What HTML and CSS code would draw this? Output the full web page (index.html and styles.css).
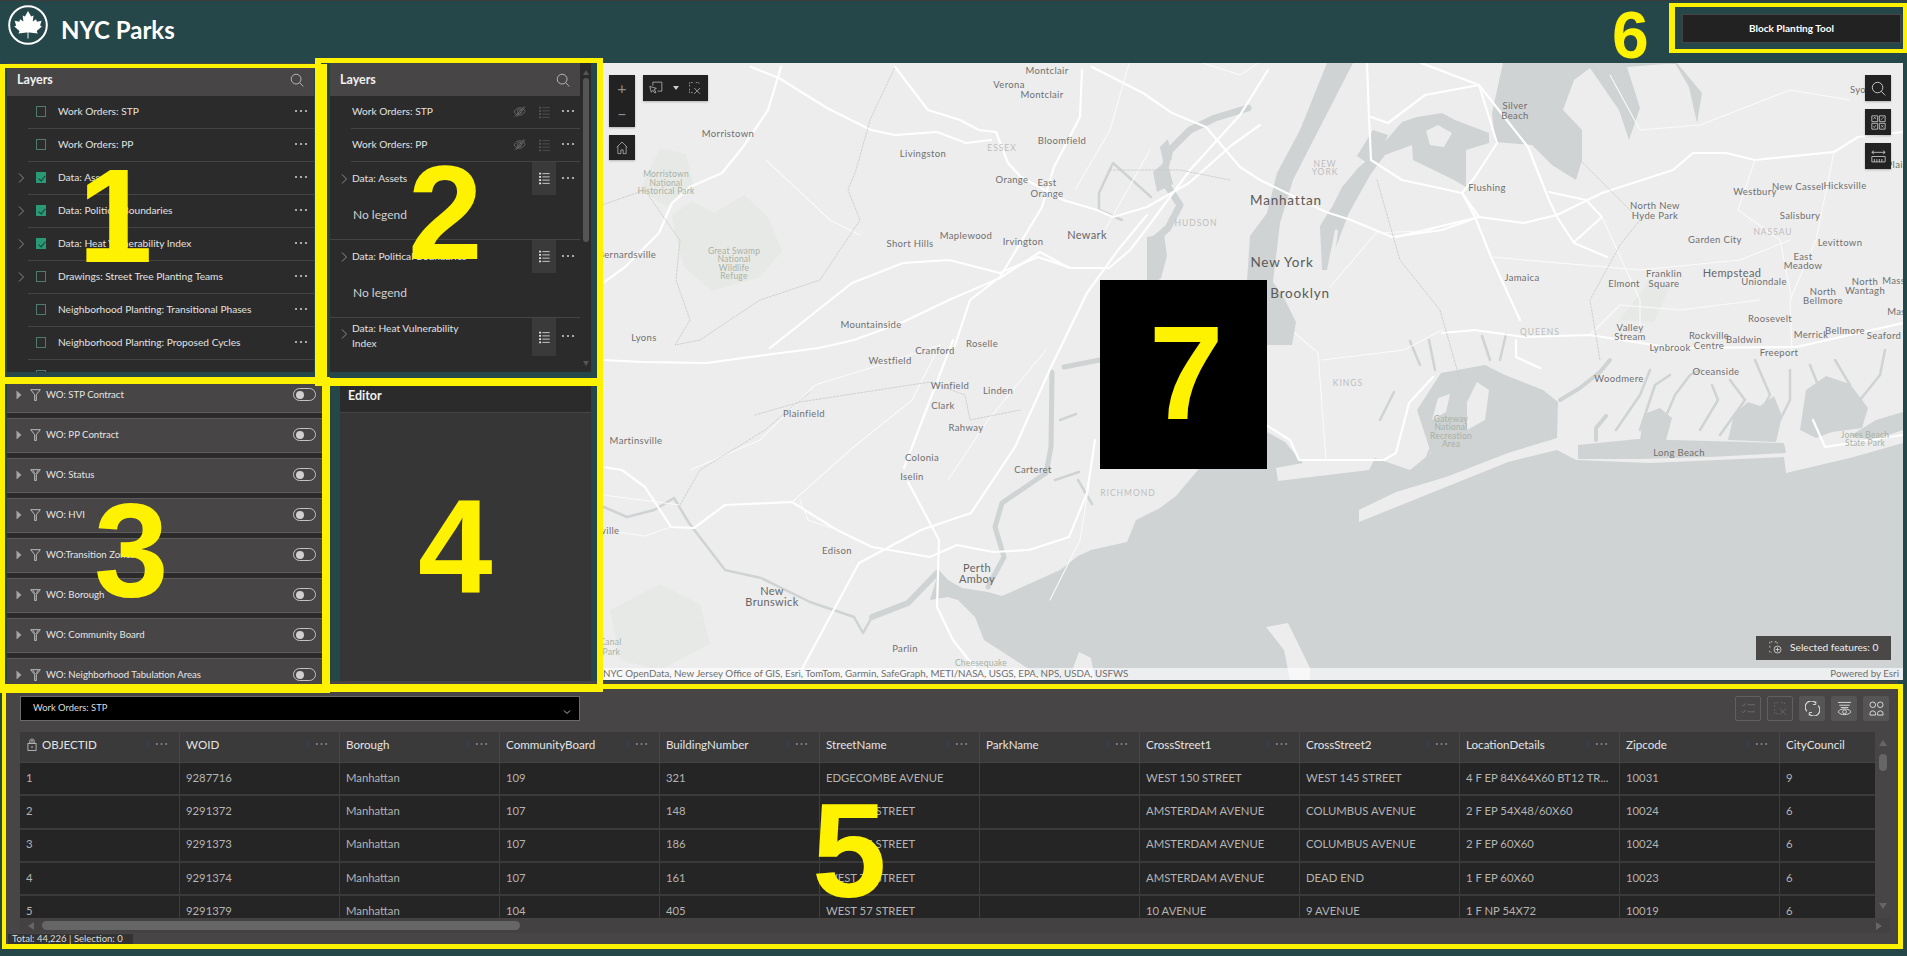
FILE: index.html
```html
<!DOCTYPE html>
<html lang="en">
<head>
<meta charset="utf-8">
<title>NYC Parks</title>
<link rel="stylesheet" href="styles.css">
</head>
<body>
<svg class="sprite" aria-hidden="true">
  <symbol id="i-search" viewBox="0 0 16 16"><circle cx="7" cy="7" r="5.6" fill="none" stroke="currentColor"/><path d="M11 11l4.2 4.4" stroke="currentColor" fill="none"/></symbol>
  <symbol id="i-dots" viewBox="0 0 14 4"><circle cx="2" cy="2" r="1.1" fill="currentColor"/><circle cx="7" cy="2" r="1.1" fill="currentColor"/><circle cx="12" cy="2" r="1.1" fill="currentColor"/></symbol>
  <symbol id="i-chev" viewBox="0 0 8 12"><path d="M2 1.5L6.5 6 2 10.5" fill="none" stroke="currentColor"/></symbol>
  <symbol id="i-list" viewBox="0 0 14 16"><path d="M1 2h2.4M1 6h2.4M1 10h2.4M1 14h2.4" stroke="currentColor" stroke-width="2" fill="none"/><path d="M5 2h9M5 6h9M5 10h9M5 14h9" stroke="currentColor" fill="none"/></symbol>
  <symbol id="i-eyeoff" viewBox="0 0 14 14"><path d="M1 7.5C3 4 5 3 7.5 3S12 4.5 13 7c-2 3-4 4-6 4S2.500 10 1 7.500z" fill="none" stroke="currentColor"/><circle cx="7" cy="7" r="2.200" fill="none" stroke="currentColor"/><path d="M2 12.500L12 1.500M4 12.500l9-10" stroke="currentColor" fill="none"/></symbol>
  <symbol id="i-funnel" viewBox="0 0 11 12"><path d="M.7.700h9.600L6.300 5.700v5.800H4.700V5.700z" fill="none" stroke="currentColor" stroke-width=".9"/></symbol>
  <symbol id="i-funnel2" viewBox="0 0 11 12"><path d="M.7.700h9.600L6.300 5.700v5.800H4.700V5.700z" fill="none" stroke="currentColor" stroke-width=".9"/><path d="M3 1l2 4M8 1L6 5" stroke="currentColor" stroke-width=".7"/></symbol>
  <symbol id="i-caret" viewBox="0 0 6 10"><path d="M.5.500L5.500 5 .5 9.500z" fill="currentColor"/></symbol>
  <symbol id="i-lock" viewBox="0 0 10 14"><path d="M2.500 6V3.500a2.500 2.500 0 0 1 5 0V6M4 6V3.500a1 1 0 0 1 2 0V6" fill="none" stroke="currentColor" stroke-width=".8"/><rect x=".6" y="6" width="8.800" height="7.400" fill="none" stroke="currentColor" stroke-width=".9"/><path d="M5 8.500v2.500" stroke="currentColor"/></symbol>
  <symbol id="i-sort" viewBox="0 0 6 12"><path d="M3 1l2.500 3.500h-5zM3 11L.5 7.500h5z" fill="currentColor"/></symbol>
  <symbol id="i-down" viewBox="0 0 8 6"><path d="M1 1.500L4 4.500 7 1.500" fill="none" stroke="currentColor"/></symbol>
  <symbol id="i-home" viewBox="0 0 16 18"><path d="M8 1L2.500 6.500v10h4v-5h3v5h4v-10zM2.500 6.500L1 8M13.500 6.500L15 8" fill="none" stroke="currentColor"/></symbol>
  <symbol id="i-select" viewBox="0 0 18 18"><path d="M5 6V1.500h11.500v11.500H11" fill="none" stroke="currentColor"/><path d="M1 7l8.500 2.500-3 1.500 2.500 3.500-1.500 1-2.500-3.500-2 2.500z" fill="none" stroke="currentColor"/></symbol>
  <symbol id="i-clear" viewBox="0 0 18 18"><path d="M2 7V2h5M10 2h4v3M2 10v5h4" fill="none" stroke="currentColor" stroke-dasharray="2 1.500"/><path d="M8 9l7.500 7.500M15.500 9L8 16.500" fill="none" stroke="currentColor"/></symbol>
  <symbol id="i-qr" viewBox="0 0 18 18"><path d="M1 1h7v7H1zM10 1h7v7h-7zM1 10h7v7H1zM10 10h7v7h-7z" fill="none" stroke="currentColor"/><path d="M3 5l1.500-2.500L6 5M11.500 6L15.500 2.500M3 13l1 2 2-3M12 12l3 3M15 12l-3 3" fill="none" stroke="currentColor" stroke-width=".8"/></symbol>
  <symbol id="i-measure" viewBox="0 0 18 18"><path d="M1 4h16M1 4l2.500-2M1 4l2.500 2M17 4l-2.500-2M17 4l-2.500 2" fill="none" stroke="currentColor"/><path d="M1 9h16v6.500H1z" fill="none" stroke="currentColor"/><path d="M4 12v3.500M7 12v3.500M10 12v3.500M13 12v3.500" stroke="currentColor"/></symbol>
  <symbol id="i-selfeat" viewBox="0 0 16 16"><path d="M1 3V1h3M7 1h3v2M1 6v3M1 12v2h2" fill="none" stroke="currentColor" stroke-dasharray="2 1.400"/><circle cx="10.500" cy="10.500" r="4.300" fill="none" stroke="currentColor"/><path d="M10.500 8v5M8 10.500h5" stroke="currentColor"/></symbol>
  <symbol id="i-checks" viewBox="0 0 16 14"><path d="M1 3l1.500 1.500L5 1.500M1 10l1.500 1.500L5 8.500" fill="none" stroke="currentColor"/><path d="M7 3h8M7 10.500h8" stroke="currentColor"/></symbol>
  <symbol id="i-refresh" viewBox="0 0 16 16"><path d="M2 11A6.500 6.500 0 0 1 11.500 2M14 5a6.500 6.500 0 0 1-9.500 9" fill="none" stroke="currentColor" stroke-width="1.200"/><path d="M11.500 .5v3.200H8.500M4.500 15.500v-3.200h3" fill="none" stroke="currentColor"/></symbol>
  <symbol id="i-eyelist" viewBox="0 0 16 16"><path d="M1 1.500h14M2.500 4.500h11M4 7h8" stroke="currentColor" fill="none"/><path d="M1 11.500C3 9 5.500 8.500 8 8.500s5 .5 7 3c-2 2.500-4.500 3-7 3s-5-.5-7-3z" fill="none" stroke="currentColor"/><circle cx="8" cy="11.500" r="2" fill="none" stroke="currentColor"/></symbol>
  <symbol id="i-grid4" viewBox="0 0 16 16"><circle cx="4" cy="4" r="3" fill="none" stroke="currentColor"/><circle cx="12" cy="4" r="3" fill="none" stroke="currentColor"/><path d="M1 15v-1.500a3 3 0 0 1 6 0V15zM9 15v-1.500a3 3 0 0 1 6 0V15z" fill="none" stroke="currentColor"/></symbol>
</svg>

<div class="app">
  <header class="topbar">
    <svg class="logo" viewBox="0 0 40 40"><circle cx="20" cy="20" r="18.800" fill="none" stroke="#fff" stroke-width="2"/><path d="M20 6l3.200 5.500 2.300-1-.7 6 3.200-2.300 1 2.500 4.500-.9-1.400 4.600 1.800 1.100-5.200 4.600 1 2.300-8.200-.8h-2.800l-8.200.8 1-2.300-5.200-4.600 1.800-1.100-1.400-4.600 4.500.9 1-2.500 3.200 2.300-.7-6 2.300 1z" fill="#fff"/><path d="M20 26v7.500" stroke="#fff" stroke-width=".9"/></svg>
    <div class="brand">NYC Parks</div>
    <button class="block-tool">Block Planting Tool</button>
  </header>

  <main class="workspace">
    <div class="sidebar">
      <section class="panel layers-a">
        <div class="panel-head"><span>Layers</span><svg class="ico-search"><use href="#i-search"/></svg></div>
        <div class="list">
          <div class="lrow"><span class="exp"></span><div class="lrow-in"><i class="cb"></i><span class="lname">Work Orders: STP</span><svg class="dots"><use href="#i-dots"/></svg></div></div>
          <div class="lrow"><span class="exp"></span><div class="lrow-in"><i class="cb"></i><span class="lname">Work Orders: PP</span><svg class="dots"><use href="#i-dots"/></svg></div></div>
          <div class="lrow"><span class="exp"><svg class="chev"><use href="#i-chev"/></svg></span><div class="lrow-in"><i class="cb on"></i><span class="lname">Data: Assets</span><svg class="dots"><use href="#i-dots"/></svg></div></div>
          <div class="lrow"><span class="exp"><svg class="chev"><use href="#i-chev"/></svg></span><div class="lrow-in"><i class="cb on"></i><span class="lname">Data: Political Boundaries</span><svg class="dots"><use href="#i-dots"/></svg></div></div>
          <div class="lrow"><span class="exp"><svg class="chev"><use href="#i-chev"/></svg></span><div class="lrow-in"><i class="cb on"></i><span class="lname">Data: Heat Vulnerability Index</span><svg class="dots"><use href="#i-dots"/></svg></div></div>
          <div class="lrow"><span class="exp"><svg class="chev"><use href="#i-chev"/></svg></span><div class="lrow-in"><i class="cb"></i><span class="lname">Drawings: Street Tree Planting Teams</span><svg class="dots"><use href="#i-dots"/></svg></div></div>
          <div class="lrow"><span class="exp"></span><div class="lrow-in"><i class="cb"></i><span class="lname">Neighborhood Planting: Transitional Phases</span><svg class="dots"><use href="#i-dots"/></svg></div></div>
          <div class="lrow"><span class="exp"></span><div class="lrow-in"><i class="cb"></i><span class="lname">Neighborhood Planting: Proposed Cycles</span><svg class="dots"><use href="#i-dots"/></svg></div></div>
          <div class="lrow"><span class="exp"></span><div class="lrow-in"><i class="cb"></i><span class="lname">Park Planting: Park Program Tasks</span><svg class="dots"><use href="#i-dots"/></svg></div></div>
        </div>
      </section>

      <section class="panel layers-b">
        <div class="layers-b-main">
          <div class="panel-head"><span>Layers</span><svg class="ico-search"><use href="#i-search"/></svg></div>
          <div class="list">
            <div class="brow"><div class="brow-in"><span class="bname">Work Orders: STP</span><svg class="ic-eye"><use href="#i-eyeoff"/></svg><span class="legend-btn off"><svg class="ic-list"><use href="#i-list"/></svg></span><svg class="dots"><use href="#i-dots"/></svg></div></div>
            <div class="brow"><div class="brow-in"><span class="bname">Work Orders: PP</span><svg class="ic-eye"><use href="#i-eyeoff"/></svg><span class="legend-btn off"><svg class="ic-list"><use href="#i-list"/></svg></span><svg class="dots"><use href="#i-dots"/></svg></div></div>
            <div class="bgroup">
              <div class="brow top"><svg class="chev b"><use href="#i-chev"/></svg><div class="brow-in plain"><span class="bname">Data: Assets</span><span class="legend-btn"><svg class="ic-list"><use href="#i-list"/></svg></span><svg class="dots"><use href="#i-dots"/></svg></div></div>
              <div class="nolegend">No legend</div>
            </div>
            <div class="bgroup">
              <div class="brow top"><svg class="chev b"><use href="#i-chev"/></svg><div class="brow-in plain"><span class="bname">Data: Political Boundaries</span><span class="legend-btn"><svg class="ic-list"><use href="#i-list"/></svg></span><svg class="dots"><use href="#i-dots"/></svg></div></div>
              <div class="nolegend">No legend</div>
            </div>
            <div class="brow tall"><svg class="chev b"><use href="#i-chev"/></svg><div class="brow-in plain"><span class="bname wrap">Data: Heat Vulnerability Index</span><span class="legend-btn"><svg class="ic-list"><use href="#i-list"/></svg></span><svg class="dots"><use href="#i-dots"/></svg></div></div>
          </div>
        </div>
        <div class="vbar"><i class="up"></i><i class="thumb"></i><i class="dn"></i></div>
      </section>

      <section class="filters">
        <div class="frow"><svg class="caret"><use href="#i-caret"/></svg><svg class="funnel"><use href="#i-funnel"/></svg><span>WO: STP Contract</span><i class="toggle"></i></div>
        <div class="frow"><svg class="caret"><use href="#i-caret"/></svg><svg class="funnel"><use href="#i-funnel"/></svg><span>WO: PP Contract</span><i class="toggle"></i></div>
        <div class="frow"><svg class="caret"><use href="#i-caret"/></svg><svg class="funnel"><use href="#i-funnel2"/></svg><span>WO: Status</span><i class="toggle"></i></div>
        <div class="frow"><svg class="caret"><use href="#i-caret"/></svg><svg class="funnel"><use href="#i-funnel"/></svg><span>WO: HVI</span><i class="toggle"></i></div>
        <div class="frow"><svg class="caret"><use href="#i-caret"/></svg><svg class="funnel"><use href="#i-funnel"/></svg><span>WO:Transition Zones</span><i class="toggle"></i></div>
        <div class="frow"><svg class="caret"><use href="#i-caret"/></svg><svg class="funnel"><use href="#i-funnel2"/></svg><span>WO: Borough</span><i class="toggle"></i></div>
        <div class="frow"><svg class="caret"><use href="#i-caret"/></svg><svg class="funnel"><use href="#i-funnel2"/></svg><span>WO: Community Board</span><i class="toggle"></i></div>
        <div class="frow"><svg class="caret"><use href="#i-caret"/></svg><svg class="funnel"><use href="#i-funnel2"/></svg><span>WO: Neighborhood Tabulation Areas</span><i class="toggle"></i></div>
      </section>

      <section class="editor">
        <div class="editor-head">Editor</div>
      </section>
    </div>

    <div class="map">
      <svg class="basemap" viewBox="600 63 1303 617" preserveAspectRatio="none">
        <rect x="600" y="63" width="1303" height="617" fill="#ededed"/>
        <!-- parks -->
        <path class="park" d="M672 215l20-14 22 12 30-18 24 22 14 34-22 26-48 14-28-24-8-30z"/>
        <path class="park" d="M640 190l20-42 26 6 8 34-28 18z"/>
        <path class="park" d="M1620 320l30-40 20 6-16 36z"/>
        <path class="park" d="M610 610l50-26 40 20 10 40-50 26-40-10z"/>
        <!-- ocean and bays -->
        <path class="w" d="M939 570L948 580 962 588 988 592 1002 596 1029 584 1060 570 1078 556 1091 550 1127 542 1136 520 1160 508 1176 496 1198 470 1230 440 1267 432 1285 442 1296 455 1303 463 1276 468 1278 481 1369 470 1375 458 1410 470 1431 453 1417 410 1441 373 1485 365 1505 375 1543 390 1558 402 1557 438 1508 453 1446 477 1396 492 1359 510 1359 522 1446 487 1508 462 1557 450 1576 460 1650 463 1784 457 1786 473 1850 458 1903 443V680H1046L1015 660 984 640 975 617 958 600 948 597 930 600z"/>
        <path class="w" d="M1578 445l60-6 70 2 76 2 2 10-76 4-70 2-62 0z"/>
        <path class="w" d="M1728 440l6-26 14-12 12 4 14-10 8 20-6 26zM1800 430l6-40 20-14 24 8 18 24-6 20-30 4-16 6zM1640 440l4-26 16-6 12 10-6 22zM1850 436l26-16 27-8v18l-30 10z"/>
        <path class="w" d="M1503 63L1492 113 1495 142 1532 145 1552 165 1576 180 1582 160 1582 130 1563 110 1574 80 1590 68 1619 110 1629 140 1640 108 1627 67 1677 63 1702 93 1697 123 1689 87 1675 63z"/>
        <path class="w" d="M1417 117L1402 122 1384 143 1371 157 1359 167 1342 187 1322 227 1338 230 1336 247 1348 215 1370 175 1385 155 1412 145 1413 160 1454 180 1466 187 1466 150 1489 143 1489 133 1455 120 1442 113z"/>
        <path class="w" d="M1327 63L1300 130 1277 173 1267 213 1250 236 1247 282 1220 300 1205 330 1260 345 1292 345 1296 322 1285 300 1273 282 1280 223 1293 180 1317 133 1353 63z"/>
        <path class="w" d="M1373 130L1357 156 1367 163 1330 210 1320 226 1322 270 1327 270 1335 230 1372 172 1388 135z"/>
        <path class="w" d="M1147 237l17-3 3 22-6 22-14 10z"/>
        <path class="w" d="M1160 147l8-8 4 20-8 6zM1153 172l14-12 6 24-16 8z"/>
        <path class="isl" d="M1266 627l22-4 22 45v12h-20l-6-30z"/>
        <path class="isl" d="M1073 668l6-16 12 6 4 22h-22z"/>
        <path class="ws" d="M1248 108L1215 118 1190 130 1170 150 1162 178 1180 205 1168 228 1154 240" stroke-width="7"/>
        <path class="ws thin" d="M1122 220L1099 210 1099 193 1113 163 1151 197"/>
        <path class="ws" d="M937 573L908 603 872 617" stroke-width="6"/>
        <path class="ws thin" d="M872 617L863 633 854 617 810 602 761 578 725 570 689 523 674 498 654 510 627 517 604 507"/>
        <path class="ws" d="M1064 367L1100 360M1052 372L1051 447 1046 473 1002 503 995 527 1004 557 988 587" stroke-width="5"/>
        <path class="ws thin" d="M1060 420l16-6M1078 480l14 24M1055 480l24-8"/>
        <path class="ws thin" d="M1616 430L1640 395 1650 370M1640 430L1655 385 1670 375M1660 430L1675 395 1690 375 1700 370M1700 430L1718 400 1712 385M1720 435L1745 400 1730 380M1750 430L1770 395 1755 360M1775 430L1790 400 1790 370M1810 420L1818 385 1810 365M1830 410L1850 385 1835 360M1860 400L1880 375 1885 350"/>
        <path class="ws thin" d="M1420 365l-10-24M1435 370l-6-30M1490 360l-8-24M1500 360l6-26M1380 420l14-28M1430 450l-8 20"/>
        <path class="ws" d="M1596 440l0-12 10-12M1560 400l20-12 20-16 10-12" stroke-width="4"/>
        <!-- islands -->
        <path class="isl" d="M1432 420l14-8 4-18-12 4z"/>
        <path class="isl" d="M1430 145l14 2 8-14-14-8-12 6z"/>
        <path class="isl" d="M1467 430l18-10 4-30-12-8-10 20z"/>
        <!-- motorways -->
        <g class="r1">
          <polyline points="781,67 768,110 743,147 722,173 690,187 672,203 659,233 625,267 603,283"/>
          <polyline points="751,67 779,78 827,108 871,130 895,135 937,132 966,143 991,140"/>
          <polyline points="895,67 928,110 960,120 979,130 996,132 1008,163 1021,177 1063,200 1097,210 1113,217 1147,207 1189,183 1232,145 1260,125"/>
          <polyline points="603,360 642,362 707,363 765,355 819,348 854,340 903,322 949,300 1000,278 1040,252 1069,268 1109,268 1130,250 1147,228 1190,170 1240,115 1268,70"/>
          <polyline points="770,348 852,283 903,263 949,260 1000,273 1038,257 1071,268 1109,268"/>
          <polyline points="796,680 859,563 921,530 971,513 1015,447 1051,367 1087,293 1118,250 1147,215"/>
          <polyline points="603,467 622,470 645,487 671,527 694,528 725,505 792,502 837,530 872,547 930,557 957,545 993,552 1029,550 1069,537 1087,493 1095,440"/>
          <polyline points="954,348 970,300 1000,277 1042,207 1054,167 1080,117 1082,70"/>
          <polyline points="904,468 953,340"/>
          <polyline points="908,482 939,540 937,607 953,640 975,668"/>
          <polyline points="1092,67 1143,93 1172,113 1206,127 1240,167 1260,180 1326,212 1351,220 1392,237 1442,230 1479,217 1524,223 1557,215 1602,193 1673,170 1693,153 1726,153 1755,160 1834,152 1858,137 1903,132"/>
          <polyline points="1396,237 1479,217 1462,193 1402,180 1371,160 1369,117 1367,63"/>
          <polyline points="1425,95 1479,85 1497,143 1475,177 1462,193 1475,217 1491,257 1520,320"/>
          <polyline points="1421,63 1479,85 1528,147 1549,200 1557,217 1574,243 1607,257"/>
          <polyline points="1574,242 1602,217 1586,200 1549,192"/>
          <polyline points="1371,117 1388,123 1425,95"/>
          <polyline points="1433,377 1409,403 1396,453 1384,460 1326,460 1299,460 1290,440 1250,415"/>
          <polyline points="1524,337 1590,335 1673,348 1796,347 1903,323"/>
          <polyline points="1813,420 1825,447 1903,435"/>
          <polyline points="1516,340 1516,357 1540,368"/>
          <polyline points="1442,333 1475,330 1524,337"/>
        </g>
        <g class="r2">
          <polyline points="603,530 645,536 671,527"/>
          <polyline points="948,480 988,420 1046,350"/>
          <polyline points="1330,287 1376,233 1442,230"/>
          <polyline points="1295,333 1318,353 1326,460"/>
          <polyline points="1322,360 1404,350 1442,330"/>
          <polyline points="1792,353 1790,300 1816,240 1834,152"/>
          <polyline points="1640,345 1640,300 1602,217"/>
          <polyline points="1755,160 1738,210 1780,240 1792,300"/>
          <polyline points="1491,257 1640,270 1740,260 1790,240"/>
          <polyline points="1590,335 1620,305 1680,310 1760,300"/>
          <polyline points="837,530 808,520 800,500M780,500 790,550 765,590 700,620 660,590 610,575"/>
          <polyline points="792,502 850,450 912,400 940,345"/>
          <polyline points="690,470 760,440 815,385 880,365 940,345"/>
          <polyline points="603,495 680,505"/>
          <polyline points="1130,60 1110,130 1075,190"/>
          <polyline points="766,160 830,220 860,235"/>
          <polyline points="1150,150 1105,230"/>
          <polyline points="1200,62 1240,75 1260,62"/>
          <polyline points="1050,600 1080,540 1088,490"/>
          <polyline points="1610,75 1640,130 1700,125 1790,90 1850,100"/>
        </g>
        <g class="bd">
          <polyline points="860,220 848,190 856,170 870,120 895,67"/>
          <polyline points="602,205 645,190 662,215 680,240 676,280 690,320 675,345 700,340 760,300 820,280 860,220"/>
          <polyline points="755,415 800,402 930,382 965,395 970,420 1020,410"/>
          <polyline points="680,505 700,470 765,430 810,392"/>
          <polyline points="1580,160 1640,220 1620,245 1590,300 1600,360"/>
          <polyline points="1377,180 1400,260 1440,310 1460,380"/>
          <polyline points="1110,170 1180,170 1230,180"/>
        </g>
        <!-- labels -->
        <g class="ml">
          <text x="1047" y="70">Montclair</text><text x="1009" y="84">Verona</text><text x="1042" y="94">Montclair</text><text x="728" y="133">Morristown</text><text x="923" y="153">Livingston</text><text x="1062" y="140">Bloomfield</text><text x="1012" y="179">Orange</text><text x="1047" y="182">East</text><text x="1047" y="193">Orange</text><text x="627" y="254">Bernardsville</text><text x="910" y="243">Short Hills</text><text x="966" y="235">Maplewood</text><text x="1023" y="241">Irvington</text><text x="871" y="324">Mountainside</text><text x="644" y="337">Lyons</text><text x="982" y="343">Roselle</text><text x="935" y="350">Cranford</text><text x="890" y="360">Westfield</text><text x="950" y="385">Winfield</text><text x="998" y="390">Linden</text><text x="943" y="405">Clark</text><text x="804" y="413">Plainfield</text><text x="966" y="427">Rahway</text><text x="636" y="440">Martinsville</text><text x="922" y="457">Colonia</text><text x="1033" y="469">Carteret</text><text x="912" y="476">Iselin</text><text x="596" y="530">Somerville</text><text x="837" y="550">Edison</text><text x="905" y="648">Parlin</text>
          <text x="1515" y="105">Silver</text><text x="1515" y="115">Beach</text><text x="1487" y="187">Flushing</text><text x="1755" y="191">Westbury</text><text x="1798" y="186">New Cassel</text><text x="1845" y="185">Hicksville</text><text x="1655" y="205">North New</text><text x="1655" y="215">Hyde Park</text><text x="1800" y="215">Salisbury</text><text x="1715" y="239">Garden City</text><text x="1840" y="242">Levittown</text><text x="1803" y="256">East</text><text x="1803" y="265">Meadow</text><text x="1664" y="273">Franklin</text><text x="1664" y="283">Square</text><text x="1624" y="283">Elmont</text><text x="1522" y="277">Jamaica</text><text x="1764" y="281">Uniondale</text><text x="1865" y="281">North</text><text x="1865" y="290">Wantagh</text><text x="1823" y="291">North</text><text x="1823" y="300">Bellmore</text><text x="1770" y="318">Roosevelt</text><text x="1630" y="327">Valley</text><text x="1630" y="336">Stream</text><text x="1709" y="335">Rockville</text><text x="1709" y="345">Centre</text><text x="1744" y="339">Baldwin</text><text x="1670" y="347">Lynbrook</text><text x="1779" y="352">Freeport</text><text x="1811" y="334">Merrick</text><text x="1845" y="330">Bellmore</text><text x="1884" y="335">Seaford</text><text x="1716" y="371">Oceanside</text><text x="1619" y="378">Woodmere</text><text x="1679" y="452">Long Beach</text><text x="1867" y="89">Syosset</text><text x="1908" y="164">Plainview</text><text x="1910" y="280">Massapequa</text><text x="1915" y="311">Massapequa</text>
        </g>
        <g class="ml big">
          <text x="1087" y="234">Newark</text><text x="1732" y="272">Hempstead</text><text x="977" y="567">Perth</text><text x="977" y="578">Amboy</text><text x="772" y="590">New</text><text x="772" y="601">Brunswick</text>
        </g>
        <g class="ml huge">
          <text x="1286" y="200">Manhattan</text><text x="1282" y="262">New York</text><text x="1300" y="293">Brooklyn</text>
        </g>
        <g class="ml light">
          <text x="1002" y="148">ESSEX</text><text x="1196" y="223">HUDSON</text><text x="1128" y="493">RICHMOND</text><text x="1325" y="164">NEW</text><text x="1325" y="172">YORK</text><text x="1773" y="232">NASSAU</text><text x="1540" y="332">QUEENS</text><text x="1348" y="383">KINGS</text>
        </g>
        <g class="ml green">
          <text x="666" y="174">Morristown</text><text x="666" y="183">National</text><text x="666" y="191">Historical Park</text><text x="734" y="251">Great Swamp</text><text x="734" y="259">National</text><text x="734" y="268">Wildlife</text><text x="734" y="276">Refuge</text><text x="1451" y="419">Gateway</text><text x="1451" y="427">National</text><text x="1451" y="436">Recreation</text><text x="1451" y="444">Area</text><text x="1865" y="435">Jones Beach</text><text x="1865" y="443">State Park</text><text x="981" y="663">Cheesequake</text><text x="600" y="642">D&amp;R Canal</text><text x="600" y="652">State Park</text>
        </g>
      </svg>

      <div class="tools-left">
        <div class="tl-col">
          <div class="tool-group zoom"><span class="zbtn">+</span><span class="zbtn">&#8722;</span></div>
          <div class="tool-group"><span class="sq"><svg class="ic-home"><use href="#i-home"/></svg></span></div>
        </div>
        <div class="tool-group sel"><svg class="ic-sel"><use href="#i-select"/></svg><i class="sel-caret"></i><svg class="ic-sel"><use href="#i-clear"/></svg></div>
      </div>
      <div class="tools-right">
        <span class="rbtn"><svg class="ic-r"><use href="#i-search"/></svg></span>
        <span class="rbtn"><svg class="ic-r"><use href="#i-qr"/></svg></span>
        <span class="rbtn"><svg class="ic-r"><use href="#i-measure"/></svg></span>
      </div>
      <div class="selected"><svg class="ic-selfeat"><use href="#i-selfeat"/></svg>Selected features: 0</div>
      <div class="attrib"><span>NYC OpenData, New Jersey Office of GIS, Esri, TomTom, Garmin, SafeGraph, METI/NASA, USGS, EPA, NPS, USDA, USFWS</span><span>Powered by Esri</span></div>
    </div>
  </main>

  <section class="tablepanel">
    <div class="tp-bar">
      <div class="layer-select"><span>Work Orders: STP</span><svg class="ic-down"><use href="#i-down"/></svg></div>
      <div class="tp-tools">
        <span class="tbtn out"><svg><use href="#i-checks"/></svg></span>
        <span class="tbtn out"><svg><use href="#i-clear"/></svg></span>
        <span class="tbtn"><svg><use href="#i-refresh"/></svg></span>
        <span class="tbtn"><svg><use href="#i-eyelist"/></svg></span>
        <span class="tbtn"><svg><use href="#i-grid4"/></svg></span>
      </div>
    </div>
    <div class="tablewrap">
      <div class="tgrid">
        <div class="th"><svg class="ic-lock"><use href="#i-lock"/></svg><span>OBJECTID</span><svg class="ic-sort"><use href="#i-sort"/></svg><svg class="dots"><use href="#i-dots"/></svg></div>
        <div class="th"><span>WOID</span><svg class="ic-sort"><use href="#i-sort"/></svg><svg class="dots"><use href="#i-dots"/></svg></div>
        <div class="th"><span>Borough</span><svg class="ic-sort"><use href="#i-sort"/></svg><svg class="dots"><use href="#i-dots"/></svg></div>
        <div class="th"><span>CommunityBoard</span><svg class="ic-sort"><use href="#i-sort"/></svg><svg class="dots"><use href="#i-dots"/></svg></div>
        <div class="th"><span>BuildingNumber</span><svg class="ic-sort"><use href="#i-sort"/></svg><svg class="dots"><use href="#i-dots"/></svg></div>
        <div class="th"><span>StreetName</span><svg class="ic-sort"><use href="#i-sort"/></svg><svg class="dots"><use href="#i-dots"/></svg></div>
        <div class="th"><span>ParkName</span><svg class="ic-sort"><use href="#i-sort"/></svg><svg class="dots"><use href="#i-dots"/></svg></div>
        <div class="th"><span>CrossStreet1</span><svg class="ic-sort"><use href="#i-sort"/></svg><svg class="dots"><use href="#i-dots"/></svg></div>
        <div class="th"><span>CrossStreet2</span><svg class="ic-sort"><use href="#i-sort"/></svg><svg class="dots"><use href="#i-dots"/></svg></div>
        <div class="th"><span>LocationDetails</span><svg class="ic-sort"><use href="#i-sort"/></svg><svg class="dots"><use href="#i-dots"/></svg></div>
        <div class="th"><span>Zipcode</span><svg class="ic-sort"><use href="#i-sort"/></svg><svg class="dots"><use href="#i-dots"/></svg></div>
        <div class="th last"><span>CityCouncil</span></div>

        <div class="td">1</div><div class="td">9287716</div><div class="td">Manhattan</div><div class="td">109</div><div class="td">321</div><div class="td">EDGECOMBE AVENUE</div><div class="td"></div><div class="td">WEST 150 STREET</div><div class="td">WEST 145 STREET</div><div class="td">4 F EP 84X64X60 BT12 TR...</div><div class="td">10031</div><div class="td">9</div>
        <div class="td">2</div><div class="td">9291372</div><div class="td">Manhattan</div><div class="td">107</div><div class="td">148</div><div class="td">WEST 86 STREET</div><div class="td"></div><div class="td">AMSTERDAM AVENUE</div><div class="td">COLUMBUS AVENUE</div><div class="td">2 F EP 54X48/60X60</div><div class="td">10024</div><div class="td">6</div>
        <div class="td">3</div><div class="td">9291373</div><div class="td">Manhattan</div><div class="td">107</div><div class="td">186</div><div class="td">WEST 85 STREET</div><div class="td"></div><div class="td">AMSTERDAM AVENUE</div><div class="td">COLUMBUS AVENUE</div><div class="td">2 F EP 60X60</div><div class="td">10024</div><div class="td">6</div>
        <div class="td">4</div><div class="td">9291374</div><div class="td">Manhattan</div><div class="td">107</div><div class="td">161</div><div class="td">WEST 75 STREET</div><div class="td"></div><div class="td">AMSTERDAM AVENUE</div><div class="td">DEAD END</div><div class="td">1 F EP 60X60</div><div class="td">10023</div><div class="td">6</div>
        <div class="td">5</div><div class="td">9291379</div><div class="td">Manhattan</div><div class="td">104</div><div class="td">405</div><div class="td">WEST 57 STREET</div><div class="td"></div><div class="td">10 AVENUE</div><div class="td">9 AVENUE</div><div class="td">1 F NP 54X72</div><div class="td">10019</div><div class="td">6</div>
      </div>
      <div class="tvbar"><i class="up"></i><i class="thumb"></i><i class="dn"></i></div>
    </div>
    <div class="thbar"><i class="left"></i><i class="thumb"></i><i class="right"></i></div>
    <div class="totals">Total: 44,226 | Selection: 0</div>
  </section>

  <!-- yellow annotation overlay -->
  <div class="mark box1"></div>
  <div class="mark box2"></div>
  <div class="mark box3"></div>
  <div class="mark box4"></div>
  <div class="mark box5"></div>
  <div class="mark box6"></div>
  <div class="num n1">1</div>
  <div class="num n2">2</div>
  <div class="num n3">3</div>
  <div class="num n4">4</div>
  <div class="num n5">5</div>
  <div class="num n6">6</div>
  <div class="blackbox"><div class="num n7">7</div></div>
</div>
</body>
</html>
```
FILE: styles.css
```css
* { box-sizing: border-box; }
html, body { margin: 0; padding: 0; }
body { width: 1907px; height: 956px; overflow: hidden; background: #26474a; font-family: Lato, "Liberation Sans", sans-serif; color: #ddd; }
.sprite { display: none; }
.app { position: relative; width: 1907px; height: 956px; display: flex; flex-direction: column; overflow: hidden; }

/* header */
.topbar { height: 63px; flex: none; display: flex; align-items: flex-start; background: #26474a; border-top: 1px solid #3b3b3b; }
.logo { width: 40px; height: 40px; margin: 4px 0 0 8px; flex: none; }
.brand { margin: 13px 0 0 13px; font-size: 24px; line-height: 32px; font-weight: 700; color: #fff; }
.block-tool { margin: 13px 6px 0 auto; width: 219px; height: 29px; padding: 0 0 2px; background: #222; color: #fff; border: 1px solid #444; font: 700 10px/1 Lato, sans-serif; }

/* workspace */
.workspace { flex: none; height: 621px; display: flex; }
.sidebar { flex: none; width: 600px; padding-left: 7px; display: grid; grid-template-columns: 323px 261px; grid-template-rows: 309px 304px; row-gap: 6px; }
.panel { overflow: hidden; background: #2b2b2b; }
.layers-a { width: 307px; }
.panel-head { height: 33px; display: flex; align-items: center; justify-content: space-between; padding: 0 10px 0 10px; background: #474545; font-size: 12.5px; font-weight: 700; color: #f0f0f0; }
.ico-search { width: 14px; height: 14px; color: #c4c4c4; }
.list { overflow: hidden; height: 276px; }
.lrow { height: 33px; display: flex; }
.exp { width: 21px; flex: none; display: flex; align-items: center; justify-content: flex-end; padding: 0 3px 2px 0; }
.chev { width: 8px; height: 12px; color: #8a8a8a; }
.lrow-in { flex: 1; display: flex; align-items: center; border-bottom: 1px solid #444; padding: 0 6px 2px 8px; }
.cb { width: 10px; height: 11px; border: 1px solid #4e7a70; flex: none; margin-right: 12px; position: relative; }
.cb.on { background: #2a9a76; border-color: #2a9a76; }
.cb.on::after { content: ""; position: absolute; left: 2.5px; top: 1px; width: 3px; height: 6px; border: solid #173f35; border-width: 0 1px 1px 0; transform: rotate(40deg); }
.lname { flex: 1; font-size: 10.2px; color: #e2e2e2; white-space: nowrap; }
.bname { font-size: 10.2px; color: #e2e2e2; flex: 1; white-space: nowrap; padding-left: 1px; }
.bname.wrap { white-space: normal; padding-right: 62px; line-height: 15px; }
.dots { width: 14px; height: 4px; color: #c8c8c8; flex: none; }

.layers-b { display: flex; background: #2b2b2b; }
.layers-b-main { width: 250px; flex: none; }
.vbar { flex: 1; position: relative; display: flex; flex-direction: column; align-items: center; }
.vbar .up { width: 0; height: 0; margin-top: 7px; border: solid transparent; border-width: 0 3.5px 5px; border-bottom-color: #555; }
.vbar .thumb { width: 6px; height: 164px; margin-top: 3px; background: #555; border-radius: 3px; }
.vbar .dn { width: 0; height: 0; margin-top: auto; margin-bottom: 6px; border: solid transparent; border-width: 5px 3.5px 0; border-top-color: #555; }
.brow { height: 33px; display: flex; padding-left: 21px; position: relative; }
.brow-in { flex: 1; display: flex; align-items: center; border-bottom: 1px solid #444; padding-right: 5px; }
.brow-in .bname, .brow-in .dots, .brow-in .ic-eye { position: relative; top: -1px; }
.brow-in.plain { border-bottom: 0; }
.brow.top { padding-left: 10px; }
.chev.b { width: 8px; height: 12px; margin: auto 3px auto 0; flex: none; color: #8a8a8a; }
.bgroup { height: 78px; border-bottom: 1px solid #444; }
.nolegend { margin: 12px 0 0 23px; font-size: 12px; color: #d0d0d0; }
.brow.tall { height: 38px; padding-left: 10px; }
.brow.tall .chev.b { margin-top: 10px; margin-bottom: 10px; }
.ic-eye { width: 13px; height: 13px; color: #6a6a6a; flex: none; margin-right: 6px; }
.legend-btn { width: 24px; align-self: stretch; flex: none; display: flex; align-items: center; justify-content: center; background: #3a3a3a; margin-right: 5px; color: #e5e5e5; }
.legend-btn.off { background: none; color: #555; }
.ic-list { width: 12px; height: 13px; }

.filters { width: 315px; height: 304px; overflow: hidden; background: #2b2b2b; display: flex; flex-direction: column; gap: 5px; }
.frow { flex: none; height: 35px; display: flex; align-items: center; background: #474545; border-bottom: 1px solid #5d5d5d; border-top: 1px solid #5d5d5d; color: #e6e6e6; font-size: 9.6px; padding: 0 6px 2px 9px; }
.caret { width: 6px; height: 10px; color: #a5a5a5; flex: none; margin-right: 8px; }
.funnel { width: 11px; height: 12px; color: #c8c8c8; flex: none; margin-right: 5px; }
.frow span { flex: 1; white-space: nowrap; }
.toggle { width: 23px; height: 13px; border: 1px solid #c2c2c2; border-radius: 7px; position: relative; flex: none; }
.toggle::after { content: ""; position: absolute; left: 2px; top: 1.5px; width: 8px; height: 8px; background: #cfcfcf; border-radius: 50%; }
.editor { margin-left: 10px; width: 251px; height: 304px; background: #363636; }
.editor-head { height: 35px; padding: 11px 0 0 8px; background: #2b2b2b; border-bottom: 1px solid #444; font-size: 12.5px; font-weight: 700; color: #f0f0f0; line-height: 13px; }

/* map */
.map { flex: none; width: 1303px; height: 617px; position: relative; overflow: hidden; background: #ededed; }
.basemap { display: block; width: 1303px; height: 617px; }
.park { fill: #e7e9e6; }
.w { fill: #cfd3d4; }
.ws { fill: none; stroke: #cfd3d4; stroke-linejoin: round; stroke-linecap: round; }
.ws.thin { stroke-width: 2.5; }
.isl { fill: #ededed; }
.r1 polyline, .r2 polyline, .bd polyline { fill: none; stroke-linejoin: round; stroke-linecap: round; }
.r1 polyline { stroke: #fff; stroke-width: 2.2; }
.r2 polyline { stroke: #fafafa; stroke-width: 1.1; }
.bd polyline { stroke: #c9c9c9; stroke-width: .8; stroke-dasharray: 2 1.5; }
.ml text { font: 9.5px Lato, sans-serif; letter-spacing: .35px; fill: #6f6f6f; text-anchor: middle; dominant-baseline: central; }
.ml.big text { font-size: 11px; fill: #666; }
.ml.huge text { font-size: 13.5px; letter-spacing: .8px; fill: #5a5a5a; }
.ml.light text { font-size: 8.5px; letter-spacing: 1px; fill: #bdbdbd; }
.ml.green text { font-size: 8.5px; fill: #a8b1a4; letter-spacing: .2px; }

.tools-left { position: absolute; left: 9px; top: 12px; display: flex; gap: 8px; align-items: flex-start; }
.tl-col { display: flex; flex-direction: column; gap: 8px; }
.tool-group { background: #222; color: #aaa; box-shadow: 0 1px 2px rgba(0,0,0,.25); }
.zoom { width: 26px; height: 52px; display: flex; flex-direction: column; }
.zbtn { height: 26px; display: flex; align-items: center; justify-content: center; font-size: 16px; line-height: 1; color: #8e8e8e; }
.sq { width: 26px; height: 25px; display: flex; align-items: center; justify-content: center; }
.ic-home { width: 12px; height: 14px; color: #bbb; }
.sel { width: 65px; height: 26px; display: flex; align-items: center; justify-content: space-between; padding: 0 6px; }
.ic-sel { width: 14px; height: 14px; color: #bbb; }
.sel-caret { width: 0; height: 0; border: solid transparent; border-width: 4px 3px 0; border-top-color: #ccc; }
.tools-right { position: absolute; right: 12px; top: 12px; display: flex; flex-direction: column; gap: 8px; }
.rbtn { width: 26px; height: 26px; background: #222; display: flex; align-items: center; justify-content: center; color: #ccc; box-shadow: 0 1px 2px rgba(0,0,0,.25); }
.ic-r { width: 15px; height: 15px; }
.selected { position: absolute; right: 12px; bottom: 20px; width: 135px; height: 24px; background: #4a4847; color: #eee; font-size: 10.2px; display: flex; align-items: center; padding: 0 0 2px 13px; gap: 8px; }
.ic-selfeat { width: 13px; height: 13px; color: #ddd; }
.attrib { position: absolute; left: 0; right: 0; bottom: 0; height: 12px; display: flex; justify-content: space-between; align-items: center; padding: 0 4px 1px 3px; background: rgba(255,255,255,.62); color: #6e6e6e; font-size: 9.77px; line-height: 11px; }

/* table panel */
.tablepanel { flex: none; position: relative; margin: -3px 9px 0 6px; height: 268px; background: #474545; padding: 15px 8px 0 14px; border-radius: 0; }
.tp-bar { height: 25px; display: flex; align-items: stretch; justify-content: space-between; }
.layer-select { width: 560px; background: #000; border: 1px solid #6a6a6a; display: flex; align-items: flex-start; justify-content: space-between; padding: 5px 8px 0 12px; font-size: 9.4px; color: #ddd; }
.ic-down { width: 8px; height: 6px; margin-top: 7px; color: #bbb; }
.tp-tools { display: flex; gap: 6px; margin-right: 1px; }
.tbtn { width: 26px; display: flex; align-items: center; justify-content: center; background: #555; color: #ddd; border-radius: 2px; }
.tbtn svg { width: 15px; height: 15px; }
.tbtn.out { background: none; border: 1px solid #606060; color: #6c6c6c; }
.tablewrap { margin-top: 11px; height: 186px; display: flex; width: 1870px; }
.tgrid { width: 1855px; flex: none; display: grid; grid-template-columns: repeat(11, 160px) 1fr; grid-template-rows: 31px repeat(5, 33.33px); overflow: hidden; background: #252525; }
.th { background: #3a3a3a; border-right: 1px solid #484848; border-bottom: 1px solid #444; display: flex; align-items: center; padding: 0 11px 6px 6px; font-size: 11.6px; color: #e4e4e4; white-space: nowrap; }
.th.last { border-right: 0; }
.th span { flex: 1; }
.ic-lock { width: 10px; height: 13px; color: #c4c4c4; margin: 0 5px 0 1px; flex: none; }
.ic-sort { width: 5px; height: 10px; color: #2f4257; flex: none; margin-right: 5px; }
.th .dots { width: 13px; color: #888; }
.td { border-right: 1px solid #3e3e3e; border-bottom: 2px solid #3a3a3a; padding: 0 0 3px 6px; display: flex; align-items: center; font-size: 11.3px; color: #b4b4b4; white-space: nowrap; overflow: hidden; }
.td:nth-child(12n) { border-right: 0; }
.tvbar { flex: 1; display: flex; flex-direction: column; align-items: center; background: #474545; }
.tvbar .up { width: 0; height: 0; margin-top: 8px; border: solid transparent; border-width: 0 4.5px 6px; border-bottom-color: #666; }
.tvbar .thumb { width: 8px; height: 17px; margin-top: 8px; border-radius: 4px; background: #666; }
.tvbar .dn { width: 0; height: 0; margin-top: auto; margin-bottom: 9px; border: solid transparent; border-width: 6px 4.5px 0; border-top-color: #666; }
.thbar { height: 15px; width: 1870px; display: flex; align-items: center; background: #434141; }
.thbar .left { width: 0; height: 0; margin-left: 8px; border: solid transparent; border-width: 4.5px 6px 4.5px 0; border-right-color: #666; }
.thbar .thumb { width: 478px; height: 9px; margin-left: 8px; border-radius: 5px; background: #666; }
.thbar .right { width: 0; height: 0; margin-left: auto; margin-right: 8px; border: solid transparent; border-width: 4.5px 0 4.5px 6px; border-left-color: #666; }
.totals { position: absolute; left: 2px; bottom: 5px; width: 125px; height: 10px; background: #333; color: #ddd; font-size: 9.5px; line-height: 10px; padding-left: 4px; white-space: nowrap; }

/* yellow annotations */
.mark { position: absolute; border: 5px solid #fff200; pointer-events: none; }
.box1 { left: 0; top: 64px; width: 327px; height: 319px; border-width: 4px 11px 6px 5px; }
.box2 { left: 315px; top: 58px; width: 288px; height: 328px; border-width: 5px 6px 8px 6px; }
.box3 { left: 0; top: 377px; width: 330px; height: 316px; border-width: 7px 8px 9px 5px; }
.box4 { left: 322px; top: 378px; width: 281px; height: 314px; border-width: 8px 6px 7px 6px; }
.box5 { left: 2px; top: 684px; width: 1901px; height: 265px; border-width: 5px 5px 5px 4px; }
.box6 { left: 1669px; top: 3px; width: 238px; height: 50px; border-width: 4px 4px 4px 6px; }
.num { position: absolute; font: 700 134px/1 "Liberation Sans", Arial, sans-serif; color: #fff200; }
.n1 { left: 78px; top: 149px; }
.n2 { left: 408px; top: 146px; }
.n3 { left: 94px; top: 484px; }
.n4 { left: 418px; top: 480px; }
.n5 { left: 812px; top: 784px; }
.n6 { left: 1612px; top: 2px; font-size: 66px; }
.blackbox { position: absolute; left: 1100px; top: 280px; width: 167px; height: 189px; background: #000; }
.n7 { left: 49px; top: 26px; }
```
